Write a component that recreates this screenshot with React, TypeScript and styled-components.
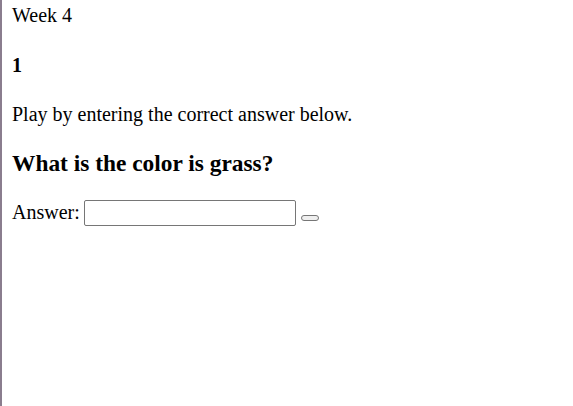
import React from 'react';
import styled, { createGlobalStyle } from 'styled-components';

const GlobalStyle = createGlobalStyle`
  html, body {
    margin: 0;
    background: #fff;
  }
  body {
    font-family: "Liberation Serif", "Times New Roman", serif;
    font-size: 20px;
    color: #000;
  }
`;

const Page = styled.div`
  min-height: 406px;
  box-sizing: border-box;
  border-left: 2px solid #8a7d8e;
  padding: 4px 10px;
`;

const WeekLabel = styled.div``;

const Round = styled.h4`
  font-size: 1em;
  margin: 1.33em 0;
`;

const Intro = styled.p`
  margin: 1em 0;
`;

const Question = styled.h3`
  font-size: 1.17em;
  margin: 1em 0;
`;

const AnswerForm = styled.form`
  display: flex;
  align-items: center;
  gap: 4px;
`;

const AnswerInput = styled.input`
  box-sizing: border-box;
  width: 212px;
  height: 26px;
  border: 1px solid #767676;
  border-radius: 2px;
  padding: 1px 2px;
  font: inherit;
`;

const SubmitButton = styled.button`
  box-sizing: border-box;
  width: 18px;
  height: 6px;
  padding: 0;
  margin-left: 1px;
  margin-top: 10px;
  border: 1px solid #767676;
  border-radius: 3px;
  background: #efefef;
`;

export default function App() {
  return (
    <>
      <GlobalStyle />
      <Page>
        <WeekLabel>Week 4</WeekLabel>
        <Round>1</Round>
        <Intro>Play by entering the correct answer below.</Intro>
        <Question>What is the color is grass?</Question>
        <AnswerForm onSubmit={(e) => e.preventDefault()}>
          <label htmlFor="answer">Answer:</label>
          <AnswerInput id="answer" type="text" />
          <SubmitButton type="submit" />
        </AnswerForm>
      </Page>
    </>
  );
}
